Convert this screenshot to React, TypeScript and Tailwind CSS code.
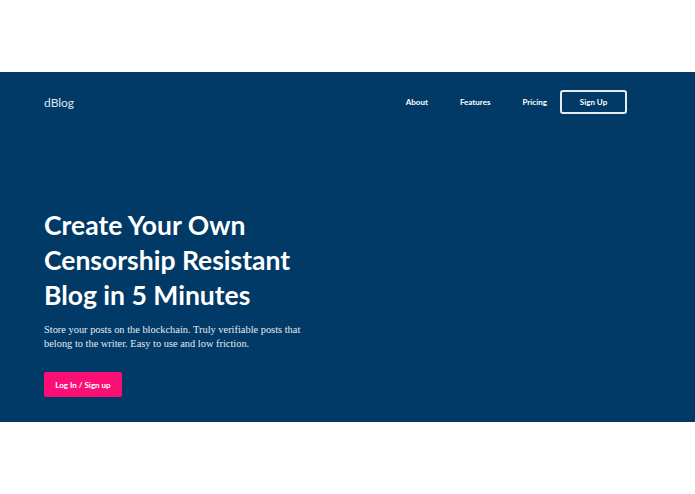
export default function App() {
  return (
    <div className="w-full min-h-screen bg-white font-['Lato',sans-serif]">
      <div className="h-[72px]" />
      <section className="h-[350px] bg-[#013a66] px-[44px] flex flex-col">
        <nav className="flex items-center justify-between pt-[18px] pr-[24px]">
          <span className="text-[12px] text-[#dbe7f2] translate-y-[1px]">dBlog</span>
          <div className="flex items-center text-[8px] font-bold text-white">
            <a className="mr-[32px]">About</a>
            <a className="mr-[32px]">Features</a>
            <a className="mr-[13px]">Pricing</a>
            <button className="w-[67px] h-[24px] border-2 border-[#e3ecf4] rounded-[3px] text-[8px] font-bold">
              Sign Up
            </button>
          </div>
        </nav>
        <h1 className="mt-[94px] text-[26.5px] leading-[35px] font-bold text-white">
          Create Your Own
          <br />
          Censorship Resistant
          <br />
          Blog in 5 Minutes
        </h1>
        <p className="mt-[10px] w-[280px] text-[10.4px] leading-[14px] text-[#e3eaf2] font-['Liberation_Serif',serif]">
          Store your posts on the blockchain. Truly verifiable posts that belong to the writer. Easy to use and low friction.
        </p>
        <button className="mt-[21px] w-[78px] h-[25px] bg-[#fb0f74] rounded-[2px] text-[8px] font-bold text-white">
          Log In / Sign up
        </button>
      </section>
    </div>
  );
}
